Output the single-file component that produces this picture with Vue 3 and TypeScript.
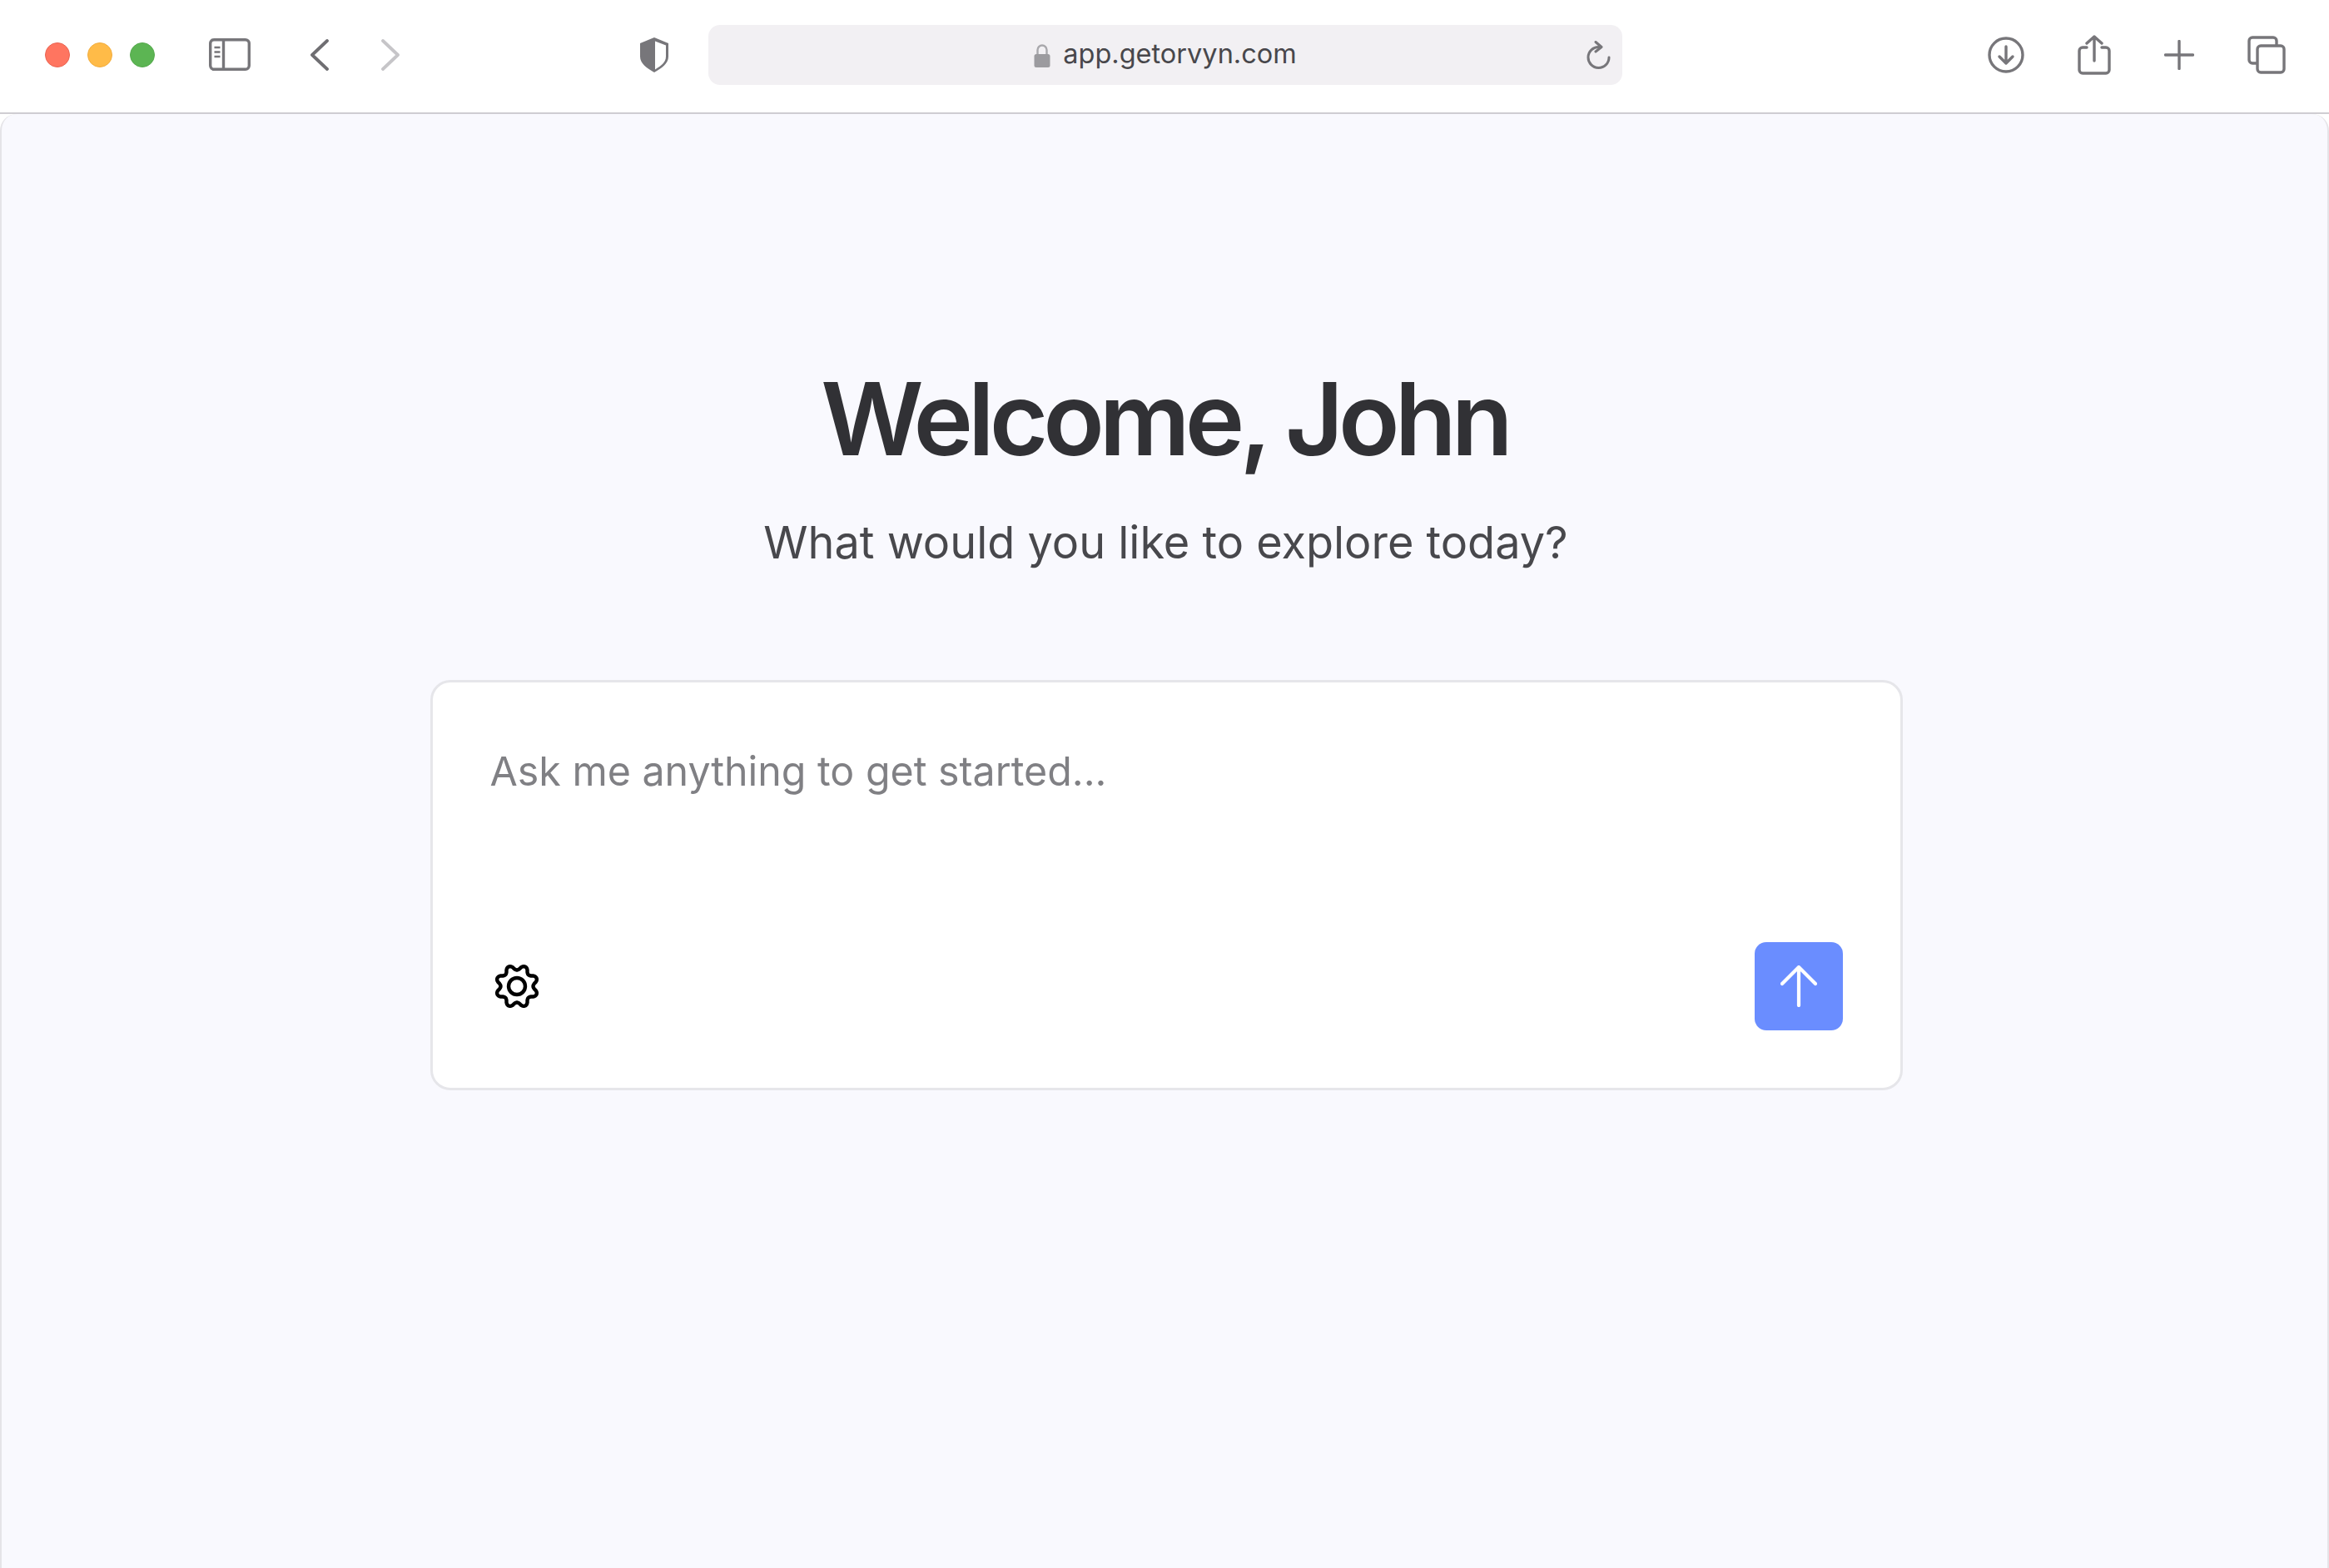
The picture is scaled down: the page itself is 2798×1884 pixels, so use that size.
<script setup lang="ts">
// gear outline: 8 soft teeth, a dip on each axis and diagonal
function gearOutline(cx: number, cy: number, mid: number, depth: number) {
  const pts: string[] = []
  for (let deg = 0; deg < 360; deg += 3) {
    const a = (deg * Math.PI) / 180
    const c = Math.cos(8 * a)
    const r = mid - depth * Math.sign(c) * Math.pow(Math.abs(c), 0.75)
    pts.push(`${(cx + r * Math.cos(a)).toFixed(2)} ${(cy + r * Math.sin(a)).toFixed(2)}`)
  }
  return `M${pts.join('L')}Z`
}

const gearPath = gearOutline(27, 27, 22.5, 3)
</script>

<template>
  <div class="window">
    <header class="toolbar">
      <div class="lights">
        <span class="light red"></span>
        <span class="light yellow"></span>
        <span class="light green"></span>
      </div>
      <svg class="ico sidebar" width="50" height="40" viewBox="0 0 50 40" fill="none" stroke="#77767a" stroke-width="3.4">
        <rect x="1.7" y="1.7" width="46.6" height="35.6" rx="4.500" />
        <path d="M17.500 2v35" />
        <path d="M6.500 11h7M6.500 16.500h7M6.500 22h7" stroke-width="2.400" />
      </svg>
      <svg class="ico back" width="24" height="38" viewBox="0 0 24 38" fill="none" stroke="#6f6e72" stroke-width="3.800" stroke-linecap="round" stroke-linejoin="round">
        <path d="M21 2 3 19l18 17" />
      </svg>
      <svg class="ico forward" width="24" height="38" viewBox="0 0 24 38" fill="none" stroke="#c6c5c8" stroke-width="3.800" stroke-linecap="round" stroke-linejoin="round">
        <path d="m3 2 18 17L3 36" />
      </svg>
      <svg class="ico shield" width="38" height="44" viewBox="0 0 38 44">
        <path d="M19 1 36 8v16c0 8-8 14-17 19C10 38 2 32 2 24V8z" fill="#77767a" />
        <path d="M20 5.500 33 10.500V24c0 7-6 11-13 15.500z" fill="#fff" />
      </svg>
      <div class="address">
        <svg class="lock" width="20" height="29" viewBox="0 0 20 29" fill="none">
          <path d="M4.500 14V8a5.500 5.500 0 0 1 11 0v6" stroke="#a9a8ac" stroke-width="2.400" />
          <rect x="0.500" y="13" width="19" height="16" rx="2.500" fill="#9c9b9f" />
        </svg>
        <span class="url">app.getorvyn.com</span>
        <svg class="reload" width="30" height="34" viewBox="0 0 30 34" fill="none" stroke="#77767a" stroke-width="3" stroke-linecap="round" stroke-linejoin="round">
          <path d="M16 7.500A12.500 12.500 0 1 0 28 20" />
          <path d="m12 1.500 7 6-7 5.500" />
        </svg>
      </div>
      <div class="actions">
        <svg class="ico" width="44" height="44" viewBox="0 0 44 44" fill="none" stroke="#77767a" stroke-width="3.400" stroke-linecap="round" stroke-linejoin="round">
          <circle cx="22" cy="22" r="20" />
          <path d="M22 12v19M14 24l8 8 8-8" />
        </svg>
        <svg class="ico" width="40" height="48" viewBox="0 0 40 48" fill="none" stroke="#77767a" stroke-width="3.400" stroke-linecap="round" stroke-linejoin="round">
          <path d="M11 15H6a4 4 0 0 0-4 4v23a4 4 0 0 0 4 4h28a4 4 0 0 0 4-4V19a4 4 0 0 0-4-4h-5" />
          <path d="M20 31V2M11 10l9-8 9 8" />
        </svg>
        <svg class="ico" width="36" height="36" viewBox="0 0 36 36" fill="none" stroke="#77767a" stroke-width="3.400" stroke-linecap="round">
          <path d="M18 1.500v33M1.500 18h33" />
        </svg>
        <svg class="ico" width="46" height="46" viewBox="0 0 46 46" fill="none" stroke="#77767a" stroke-width="3.400">
          <path d="M11 33H6a4 4 0 0 1-4-4V6a4 4 0 0 1 4-4h25a4 4 0 0 1 4 4v5" />
          <rect x="12" y="12" width="32" height="32" rx="4" />
        </svg>
      </div>
    </header>

    <main class="page">
      <h1>Welcome, John</h1>
      <p class="sub">What would you like to explore today?</p>
      <section class="card">
        <div class="placeholder">Ask me anything to get started...</div>
        <div class="card-foot">
          <svg width="54" height="54" viewBox="0 0 54 54" fill="none" stroke="#000" stroke-width="4.400" stroke-linejoin="round">
            <path :d="gearPath" />
            <circle cx="27" cy="27" r="10" />
          </svg>
          <button class="send" type="button" aria-label="Send">
            <svg width="44" height="50" viewBox="0 0 44 50" fill="none" stroke="#fff" stroke-width="4.200" stroke-linecap="round" stroke-linejoin="round">
              <path d="M22 48V2M2 22 22 2l20 20" />
            </svg>
          </button>
        </div>
      </section>
    </main>
  </div>
</template>

<style>
html,
body {
  margin: 0;
  background: #fff;
}
</style>

<style scoped>
.window {
  width: 2798px;
  height: 1884px;
  display: flex;
  flex-direction: column;
  overflow: hidden;
  font-family: Inter, "Liberation Sans", sans-serif;
}

.toolbar {
  height: 137px;
  flex: none;
  display: flex;
  align-items: center;
  background: #fff;
  padding-left: 54px;
  padding-bottom: 3px;
  box-sizing: border-box;
  border-bottom: 2px solid #cfcdd2;
}

.ico {
  display: block;
  flex: none;
}

.lights {
  display: flex;
  gap: 21px;
}

.light {
  width: 30px;
  height: 30px;
  border-radius: 50%;
  box-sizing: border-box;
  border: 1.5px solid;
}

.red {
  background: #ff7560;
  border-color: #ea6452;
}

.yellow {
  background: #ffbb48;
  border-color: #f2ad3e;
}

.green {
  background: #5cb553;
  border-color: #55aa4d;
}

.sidebar {
  margin-left: 65px;
}

.back {
  margin-left: 71px;
}

.forward {
  margin-left: 61px;
}

.shield {
  margin-left: 286px;
}

.address {
  width: 1098px;
  height: 72px;
  margin-left: 46px;
  flex: none;
  position: relative;
  display: flex;
  align-items: center;
  justify-content: center;
  gap: 15px;
  background: #f2f0f3;
  border-radius: 14px;
}

.url {
  font-size: 32.500px;
  margin-bottom: 3px;
  color: #48474b;
}

.reload {
  position: absolute;
  right: 14px;
  top: 19px;
}

.actions {
  margin-left: auto;
  margin-right: 52px;
  display: flex;
  align-items: center;
  gap: 64px;
}

.page {
  flex: 1;
  display: flex;
  flex-direction: column;
  align-items: center;
  box-sizing: border-box;
  background: #f9f9fe;
  border: 2px solid #e5e4e8;
  border-top: none;
  border-bottom: none;
  border-radius: 20px 20px 0 0;
  padding-top: 296px;
}

h1 {
  margin: 0;
  font-size: 121px;
  line-height: 140px;
  font-weight: 600;
  letter-spacing: -6px;
  color: #313135;
}

.sub {
  margin: 44px 0 0 3px;
  font-size: 54px;
  line-height: 70px;
  color: #48484c;
}

.card {
  width: 1769px;
  height: 493px;
  margin: 130px 0 0 4px;
  box-sizing: border-box;
  display: flex;
  flex-direction: column;
  justify-content: space-between;
  padding: 75px 69px 69px 69px;
  background: #fff;
  border: 3px solid #e6e6ea;
  border-radius: 24px;
}

.placeholder {
  font-size: 48.300px;
  line-height: 64px;
  color: #808084;
}

.card-foot {
  display: flex;
  align-items: center;
  justify-content: space-between;
  padding-left: 5px;
}

.send {
  width: 106px;
  height: 106px;
  padding: 0;
  border: none;
  border-radius: 14px;
  background: #6a8dff;
  display: flex;
  align-items: center;
  justify-content: center;
}
</style>
